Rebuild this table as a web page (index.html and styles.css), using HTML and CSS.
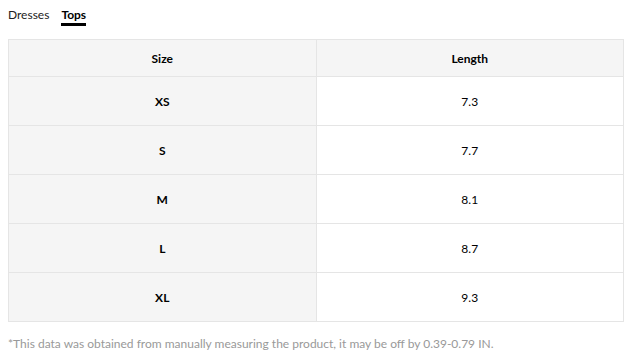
FILE: index.html
```html
<!DOCTYPE html>
<html lang="en">
<head>
  <meta charset="UTF-8">
  <meta name="viewport" content="width=device-width, initial-scale=1.0">
  <title>Size Guide</title>
  <link rel="stylesheet" href="styles.css">
</head>
<body>
  <div class="tabs">
    <span class="tab">Dresses</span>
    <span class="tab active">Tops</span>
  </div>

  <table class="size-table">
    <thead>
      <tr>
        <th>Size</th>
        <th>Length</th>
      </tr>
    </thead>
    <tbody>
      <tr><td class="size">XS</td><td>7.3</td></tr>
      <tr><td class="size">S</td><td>7.7</td></tr>
      <tr><td class="size">M</td><td>8.1</td></tr>
      <tr><td class="size">L</td><td>8.7</td></tr>
      <tr><td class="size">XL</td><td>9.3</td></tr>
    </tbody>
  </table>

  <p class="note">*This data was obtained from manually measuring the product, it may be off by 0.39-0.79 IN.</p>
</body>
</html>
```

FILE: styles.css
```css
body {
  margin: 0;
  padding: 0 8px;
  font-family: 'Lato', 'Open Sans', sans-serif;
  font-size: 12px;
  color: #000;
  background: #fff;
}

.tabs {
  display: flex;
  gap: 12px;
  padding-top: 7px;
  height: 32px;
  box-sizing: border-box;
}

.tab {
  color: #222;
  height: 19px;
  line-height: 16px;
  box-sizing: border-box;
}

.tab.active {
  font-weight: bold;
  color: #000;
  border-bottom: 3px solid #000;
}

.size-table {
  width: 616px;
  margin-top: 7px;
  border-collapse: collapse;
  table-layout: fixed;
}

.size-table th,
.size-table td {
  border: 1px solid #e5e5e5;
  text-align: center;
  padding: 0;
}

.size-table th {
  height: 36px;
  background: #f5f5f5;
  font-weight: bold;
}

.size-table td {
  height: 48px;
}

.size-table td.size {
  background: #f5f5f5;
  font-weight: bold;
}

.note {
  margin: 14px 0 0;
  color: #999;
  line-height: 16px;
}
```
